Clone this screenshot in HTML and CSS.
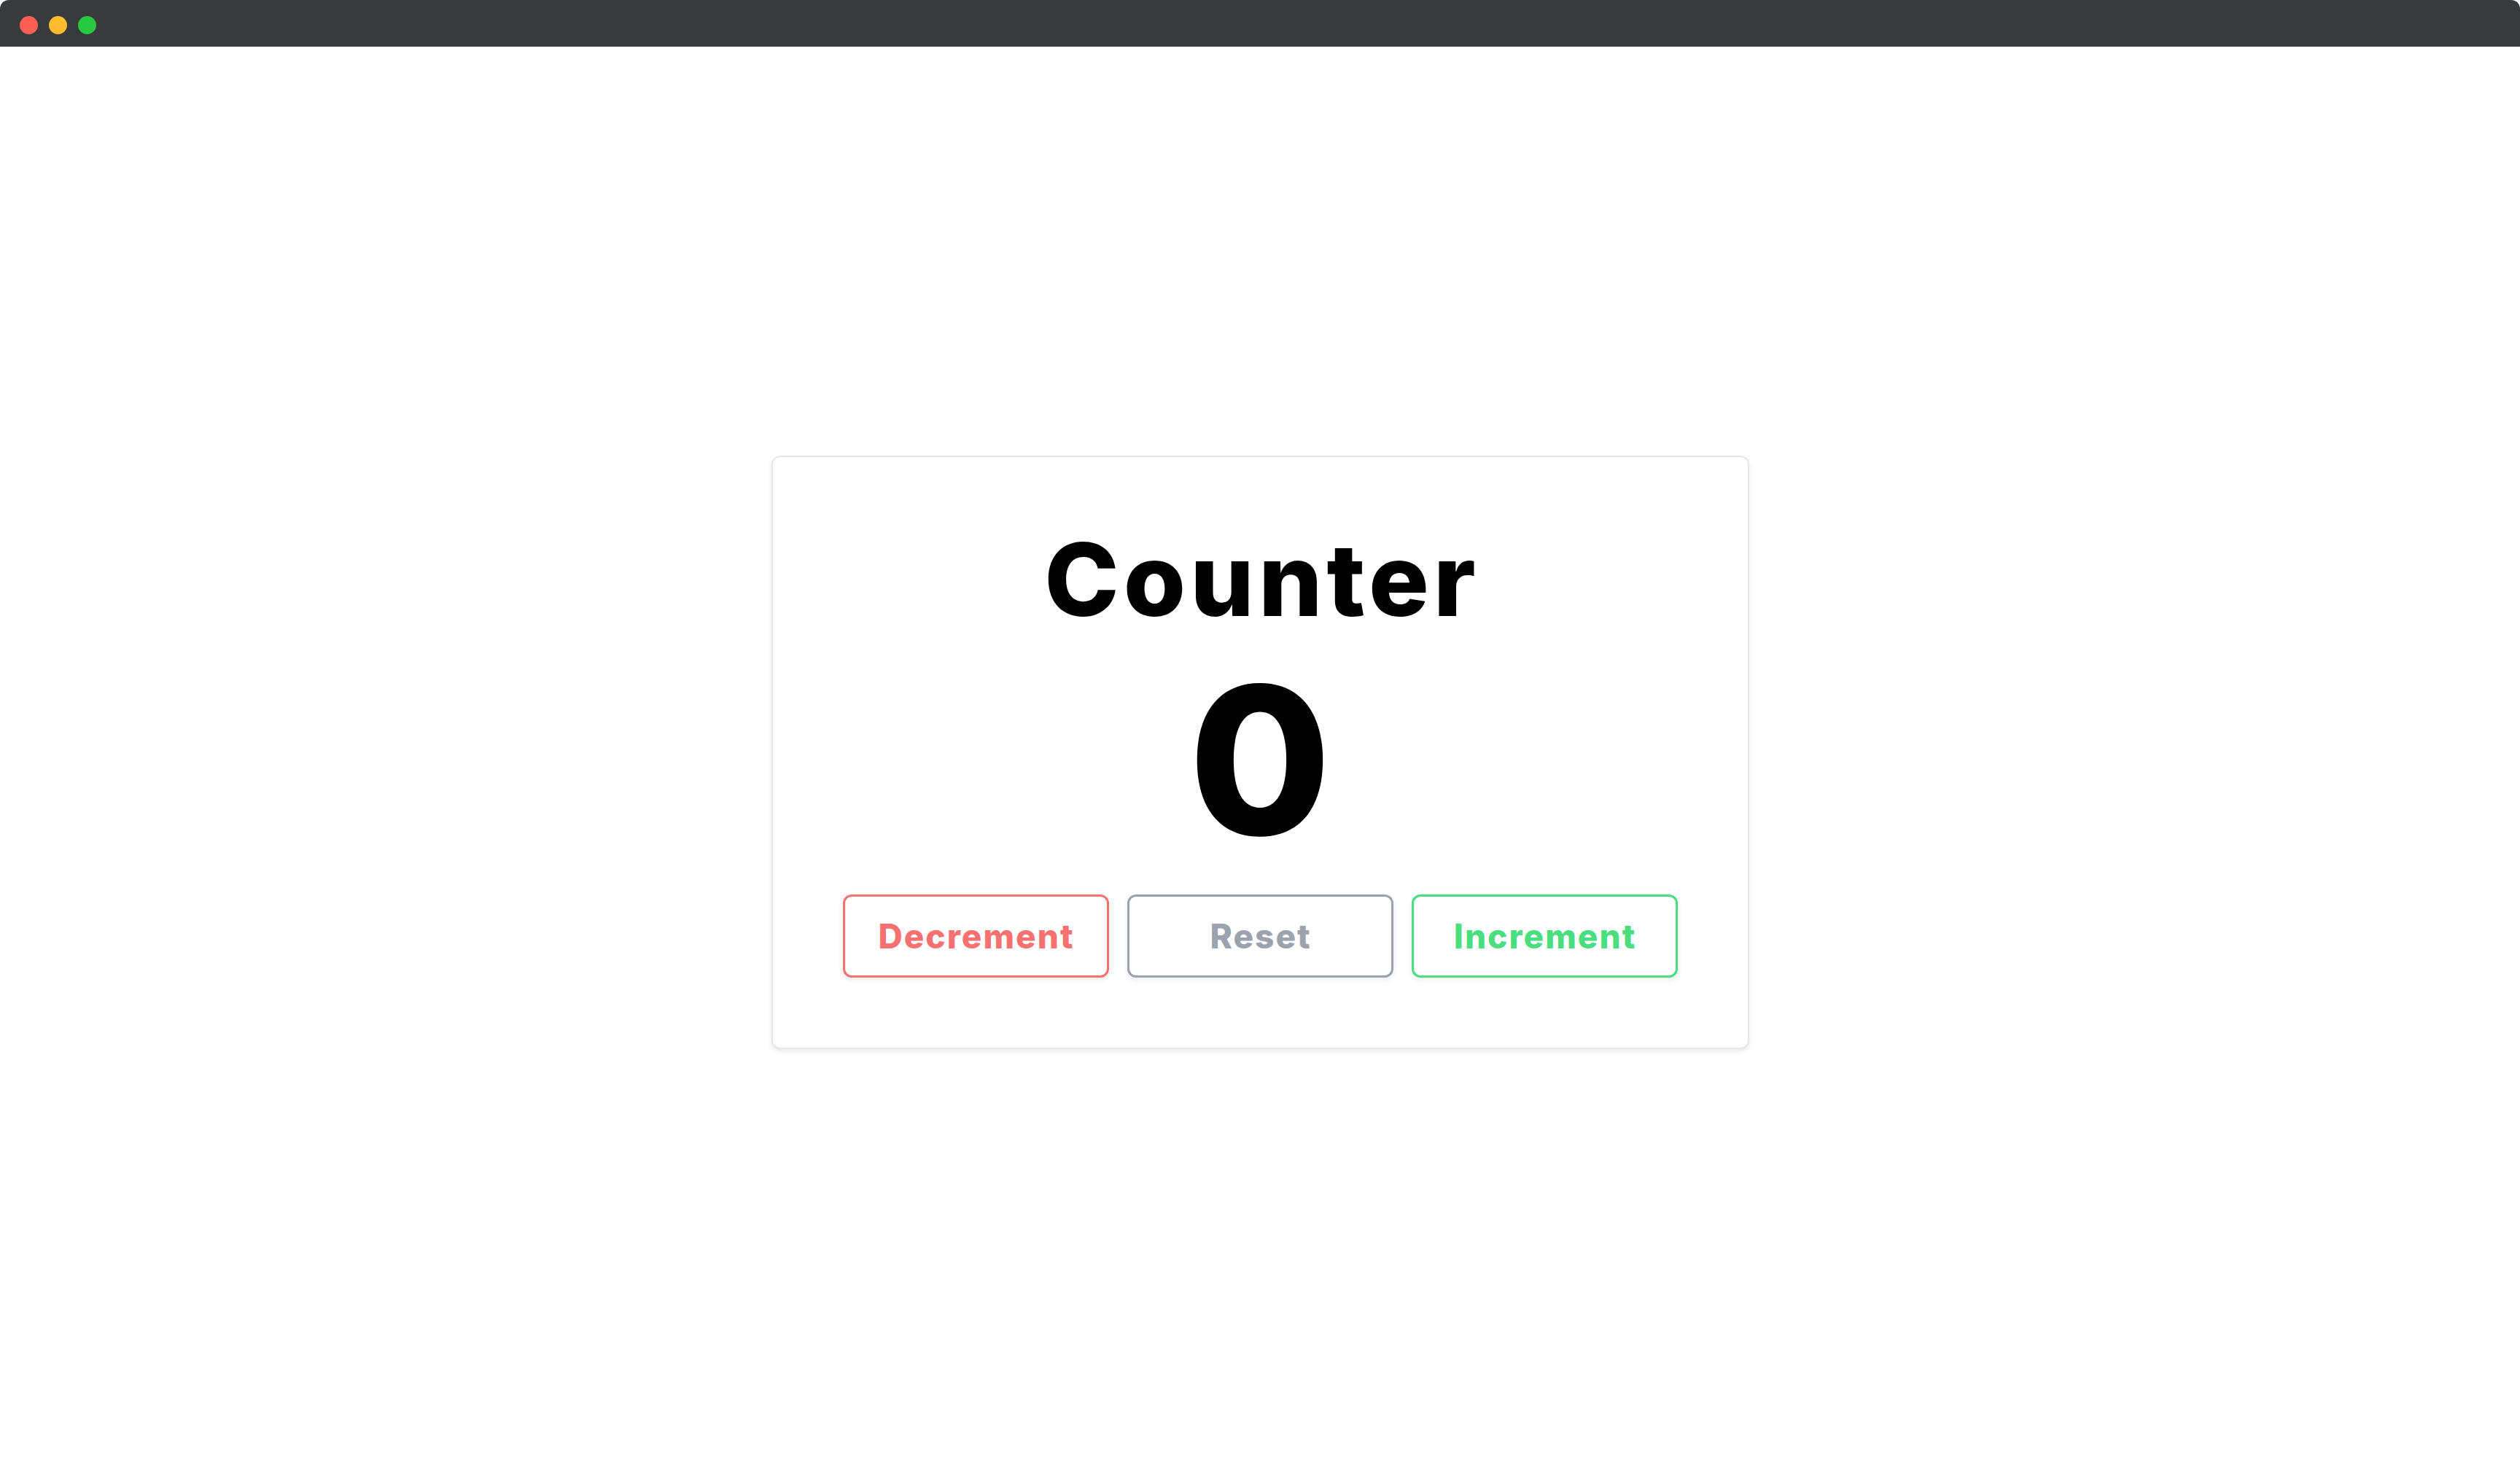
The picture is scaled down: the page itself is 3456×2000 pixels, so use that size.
FILE: index.html
```html
<!DOCTYPE html>
<html lang="en">
<head>
<meta charset="utf-8">
<title>Counter</title>
<link rel="stylesheet" href="styles.css">
</head>
<body>
  <div class="window">
    <header class="titlebar">
      <span class="dot dot-red"></span>
      <span class="dot dot-yellow"></span>
      <span class="dot dot-green"></span>
    </header>
    <main class="stage">
      <section class="card">
        <h1 class="title">Counter</h1>
        <div class="count">0</div>
        <div class="actions">
          <button class="btn btn-dec" type="button">Decrement</button>
          <button class="btn btn-reset" type="button">Reset</button>
          <button class="btn btn-inc" type="button">Increment</button>
        </div>
      </section>
    </main>
  </div>
</body>
</html>
```

FILE: styles.css
```css
* { box-sizing: border-box; }

html, body {
  margin: 0;
  padding: 0;
  height: 100%;
  background: #ffffff;
}

body {
  font-family: "Inter", "Noto Sans", sans-serif;
}

.window {
  display: flex;
  flex-direction: column;
  height: 100vh;
}

.titlebar {
  flex: 0 0 64px;
  height: 64px;
  background: #393a3c;
  border-radius: 12px 12px 0 0;
  display: flex;
  align-items: center;
  gap: 15px;
  padding: 4px 0 0 27px;
}

.dot {
  width: 25px;
  height: 25px;
  border-radius: 50%;
  display: block;
}
.dot-red { background: #ff5f57; }
.dot-yellow { background: #febc2e; }
.dot-green { background: #28c840; }

.stage {
  flex: 1;
  display: flex;
  align-items: center;
  justify-content: center;
}

.card {
  border: 2px solid #e5e7eb;
  border-radius: 12px;
  background: #fff;
  box-shadow: 0 4px 10px rgba(0, 0, 0, 0.06), 0 2px 4px rgba(0, 0, 0, 0.04);
  padding: 96px;
  display: flex;
  flex-direction: column;
  align-items: center;
}

.title {
  margin: 0;
  font-size: 138px;
  line-height: 144px;
  height: 144px;
  font-weight: 800;
  color: #000;
  letter-spacing: 6px;
  padding-left: 6px;
}

.count {
  margin-top: 32px;
  font-size: 282px;
  line-height: 288px;
  height: 288px;
  font-weight: 800;
  color: #000;
}

.actions {
  margin-top: 40px;
  display: flex;
  gap: 25px;
}

.btn {
  width: 365px;
  height: 114px;
  background: #fff;
  border: 3px solid;
  border-radius: 12px;
  box-shadow: 0 3px 8px rgba(0, 0, 0, 0.08);
  font-family: "Inter", "Noto Sans", sans-serif;
  font-size: 46px;
  font-weight: 800;
  letter-spacing: 2px;
  cursor: pointer;
  padding: 0 0 0 2px;
}

.btn-dec { color: #f87171; border-color: #f87171; }
.btn-reset { color: #9ca3af; border-color: #9ca3af; }
.btn-inc { color: #4ade80; border-color: #4ade80; }
```
